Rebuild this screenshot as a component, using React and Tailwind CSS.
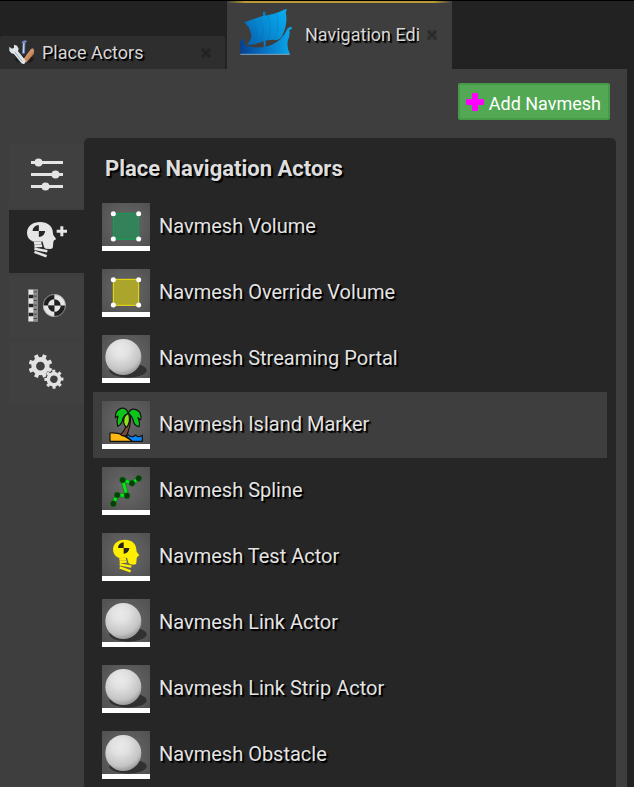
import { useId, useState } from "react";

const textShadow = "[text-shadow:1px_1px_0_#000,2px_2px_1px_#000]";

const ToolsIcon = () => (
  <svg viewBox="0 0 75 75" className="h-[25px] w-[25px] shrink-0" aria-hidden="true">
    <defs>
      <linearGradient id="handle" x1="0" y1="0" x2="1" y2="1">
        <stop offset="0" stopColor="#f3c39a" />
        <stop offset="1" stopColor="#a85d2c" />
      </linearGradient>
    </defs>
    <ellipse cx="46" cy="58" rx="28" ry="11" fill="#111" opacity="0.6" />
    <path d="M37 6 L46 1 L55 3 L49 9 L48 40 L39 42 L41 11 Z" fill="#6f88bd" />
    <path d="M43 10 L46 9 L45 38 L42 38 Z" fill="#cfdcf5" />
    <path d="M66 27 L72 25 L76 32 L74 42 L52 68 L41 60 Z" fill="url(#handle)" />
    <path d="M1 20 L9 26 L15 23 L15 14 L24 17 L29 26 L27 34 L48 59 Q52 67 45 72 Q39 73 34 66 L15 42 L7 40 L1 32 Z" fill="#dde6ea" />
    <path d="M18 36 L40 65" stroke="#9eacb5" strokeWidth="3" />
  </svg>
);

const ShipIcon = () => (
  <svg viewBox="0 0 156 138" className="h-[46px] w-[52px]" aria-hidden="true">
    <defs>
      <linearGradient id="sail" x1="0" y1="0.8" x2="1" y2="0.2">
        <stop offset="0" stopColor="#0564b4" />
        <stop offset="0.5" stopColor="#078bd2" />
        <stop offset="1" stopColor="#08aaf0" />
      </linearGradient>
      <linearGradient id="hull" x1="0" y1="0" x2="1" y2="0">
        <stop offset="0" stopColor="#053f90" />
        <stop offset="0.5" stopColor="#0875c4" />
        <stop offset="1" stopColor="#09a8ec" />
      </linearGradient>
    </defs>
    <path d="M69 8 L75 8 L77 18 L77 112 L71 114 Z" fill="#0a7cc4" />
    <path d="M13 40 L68 21 Q104 16 132 2 L141 0 L137 10 Q145 45 125 84 Q116 97 101 92 Q78 91 56 102 Q40 109 21 106 Q40 87 31 66 Q27 53 13 40 Z" fill="url(#sail)" />
    <g stroke="#056bb6" strokeWidth="2" fill="none" opacity="0.45">
      <path d="M38 32 Q58 65 43 103" />
      <path d="M60 25 Q78 62 63 97" />
      <path d="M82 19 Q100 55 84 93" />
      <path d="M108 13 Q122 50 105 91" />
    </g>
    <path d="M2 136 L0 103 Q2 91 10 91 Q16 93 12 98 Q10 110 27 112 Q60 121 94 108 Q126 94 139 65 Q142 55 155 53 L155 59 L148 64 Q151 78 143 96 Q140 116 150 136 Z" fill="url(#hull)" />
    <path d="M1 136 H149" stroke="#7fa6c4" strokeWidth="3" />
  </svg>
);

const CloseIcon = () => (
  <svg viewBox="0 0 10 10" className="h-[10px] w-[10px]" aria-hidden="true">
    <rect width="10" height="10" fill="#222" opacity="0.2" />
    <path d="M1 1 L9 9 M9 1 L1 9" stroke="#1b1b1b" strokeWidth="2" opacity="0.5" />
  </svg>
);

const HeadShape = ({ color, dark }) => (
  <>
    <path d="M35 0 C56 0 70 12 70 30 L71 36 L78 46 Q79 50 73 51 L71 56 L70 70 Q69 75 63 75 L51 74 Q46 73 45 65 L42 54 L18 55 C6 50 0 41 0 29 C1 10 16 0 35 0 Z" fill={color} />
    <path d="M32 25 V8 A17 17 0 0 0 15 25 Z M32 25 V42 A17 17 0 0 0 49 25 Z" fill={dark} />
    <path d="M19 59 L39 58 M20 67 L41 66 M20 74 L55 81 M20 83 L53 95" stroke={color} strokeWidth="7" />
  </>
);

const SlidersIcon = () => (
  <svg viewBox="0 0 34 34" className="h-[34px] w-[34px]" fill="#e4e4e4" aria-hidden="true">
    <rect x="1" y="4" width="32" height="3" />
    <rect x="1" y="16" width="32" height="3" />
    <rect x="1" y="28" width="32" height="3" />
    <circle cx="8.500" cy="5.500" r="4" />
    <circle cx="25.500" cy="17.500" r="4" />
    <circle cx="15.500" cy="29.500" r="4" />
  </svg>
);

const AddActorIcon = () => (
  <svg viewBox="0 0 120 108" className="h-[36px] w-[40px]" aria-hidden="true">
    <g transform="scale(1.11 1.08)">
      <HeadShape color="#e6e6e6" dark="#262626" />
    </g>
    <path d="M100 13 H109 V23 H120 V32 H109 V43 H100 V32 H89 V23 H100 Z" fill="#e6e6e6" />
  </svg>
);

const MeasureIcon = () => (
  <svg viewBox="0 0 114 98" className="h-[33px] w-[38px]" aria-hidden="true">
    <rect x="0" y="0" width="30" height="98" fill="#8b8b8b" />
    <rect x="2" y="2" width="14" height="94" fill="#e6e6e6" />
    <path d="M2 17 H16 V27 H2 Z M2 44 H16 V54 H2 Z M2 71 H16 V81 H2 Z" fill="#222" />
    <path d="M17 8 H27 M17 21 H27 M17 34 H27 M17 48 H27 M17 61 H27 M17 75 H27 M17 88 H27" stroke="#4a4a4a" strokeWidth="3" />
    <circle cx="79" cy="49" r="34" fill="#e6e6e6" />
    <path d="M79 49 V15 A34 34 0 0 0 45 49 Z M79 49 V83 A34 34 0 0 0 113 49 Z" fill="#202020" />
    <path d="M79 49 V30 A19 19 0 0 0 60 49 Z M79 49 V68 A19 19 0 0 0 98 49 Z" fill="#e6e6e6" />
    <path d="M79 49 V30 A19 19 0 0 1 98 49 Z M79 49 V68 A19 19 0 0 1 60 49 Z" fill="#202020" />
    <circle cx="79" cy="49" r="33" fill="none" stroke="#a8a8a8" strokeWidth="2" />
  </svg>
);

const Gear = ({ cx, cy, r, hole, tooth }) => (
  <g transform={`translate(${cx} ${cy})`}>
    {[22, 67, 112, 157, 202, 247, 292, 337].map((angle) => (
      <rect
        key={angle}
        x={-tooth / 2}
        y={-r - tooth * 0.7}
        width={tooth}
        height={tooth * 1.4}
        transform={`rotate(${angle})`}
        fill="#e2e2e2"
      />
    ))}
    <circle r={(r + hole) / 2} fill="none" stroke="#e2e2e2" strokeWidth={r - hole} />
  </g>
);

const GearsIcon = () => (
  <svg viewBox="0 0 104 104" className="h-[35px] w-[35px]" aria-hidden="true">
    <Gear cx={34} cy={36} r={27} hole={13} tooth={12} />
    <g transform="rotate(22 74 75)">
      <circle cx="74" cy="75" r="25" fill="#404040" />
      <Gear cx={74} cy={75} r={22} hole={11} tooth={9} />
    </g>
  </svg>
);

const VolumeArt = ({ fill, stroke }) => (
  <>
    <rect x="34" y="31" width="76" height="78" fill={fill} stroke={stroke} strokeWidth="3" />
    {[[34, 32], [110, 32], [34, 108], [110, 108]].map(([x, y]) => (
      <circle key={`${x}-${y}`} cx={x} cy={y} r="7.500" fill="#fff" />
    ))}
  </>
);

const SphereArt = () => {
  const id = useId();

  return (
    <>
      <defs>
        <radialGradient id={id} cx="0.42" cy="0.3" r="0.75">
          <stop offset="0" stopColor="#eaeaea" />
          <stop offset="0.3" stopColor="#e2e2e2" />
          <stop offset="0.75" stopColor="#c4c4c4" />
          <stop offset="1" stopColor="#8c8c8c" />
        </radialGradient>
      </defs>
      <ellipse cx="78" cy="106" rx="56" ry="22" fill="#2a2a2a" opacity="0.85" />
      <circle cx="64" cy="66" r="54" fill={`url(#${id})`} />
    </>
  );
};

const IslandArt = () => (
  <g stroke="#111" strokeWidth="3.500" strokeLinejoin="round">
    <path d="M24 96 Q46 94 62 102 L92 121 H24 Z" fill="#fdb813" />
    <path d="M72 105 L79 101 L84 106 L94 107 L101 102 L107 107 L115 106 L121 103 V121 H92 Z" fill="#0a84f5" />
    <path d="M79 40 L86 44 Q86 80 73 104 Q63 106 56 101 Q78 81 79 40 Z" fill="#7b4b3a" />
    <path d="M79 36 Q86 22 99 25 Q113 28 116 42 Q119 50 116 56 L108 50 Q115 65 111 77 Q96 75 93 56 Q90 45 80 37 Z" fill="#0cc41a" />
    <path d="M79 36 Q72 19 57 22 Q44 27 41 39 L40 50 L48 45 L45 60 L47 76 Q60 70 63 52 Q68 41 79 36 Z" fill="#0cc41a" />
    <path d="M80 37 Q63 45 65 64 Q66 74 74 79 Q84 65 82 49 Z" fill="#8be51a" />
  </g>
);

const SplineArt = () => (
  <>
    <polyline points="34,110 46,84 75,86 62,39 90,49 110,34" fill="none" stroke="#0b8b0f" strokeWidth="12" />
    <polyline points="34,110 46,84 75,86 62,39 90,49 110,34" fill="none" stroke="#06e81c" strokeWidth="8" />
    {[[34, 110], [46, 84], [75, 86], [62, 39], [90, 49], [110, 34]].map(([x, y]) => (
      <circle key={x} cx={x} cy={y} r="8.500" fill="#043f07" stroke="#075c0b" strokeWidth="2" />
    ))}
  </>
);

const TestActorArt = () => (
  <g transform="translate(33 20)">
    <HeadShape color="#ffee00" dark="#222" />
  </g>
);

const actors = [
  { name: "Navmesh Volume", art: <VolumeArt fill="#338259" stroke="#159d57" /> },
  { name: "Navmesh Override Volume", art: <VolumeArt fill="#aca52c" stroke="#efe40c" /> },
  { name: "Navmesh Streaming Portal", art: <SphereArt /> },
  { name: "Navmesh Island Marker", art: <IslandArt /> },
  { name: "Navmesh Spline", art: <SplineArt /> },
  { name: "Navmesh Test Actor", art: <TestActorArt /> },
  { name: "Navmesh Link Actor", art: <SphereArt /> },
  { name: "Navmesh Link Strip Actor", art: <SphereArt /> },
  { name: "Navmesh Obstacle", art: <SphereArt /> },
];

const modes = [
  { name: "Settings", icon: <SlidersIcon /> },
  { name: "Place actors", icon: <AddActorIcon /> },
  { name: "Measure", icon: <MeasureIcon /> },
  { name: "Options", icon: <GearsIcon /> },
];

const Thumbnail = ({ children }) => (
  <svg
    viewBox="0 0 144 129"
    className="h-12 w-12 shrink-0 border-b-[5px] border-white bg-[radial-gradient(circle,#6a6a6a,#505050)]"
    aria-hidden="true"
  >
    {children}
  </svg>
);

const App = () => {
  const [mode, setMode] = useState("Place actors");
  const [selected, setSelected] = useState("Navmesh Island Marker");

  return (
    <div className="flex h-screen flex-col overflow-hidden border-t border-black bg-[#222222] font-[Roboto,sans-serif] text-[#e4e4e4]">
      {/* Tabs */}
      <div className="flex h-17 shrink-0 items-end gap-0.5">
        <div className="flex h-[33px] w-[225px] items-center rounded-t-[3px] bg-[#2e2e2e] pr-3.5 pl-[9px]">
          <button className="flex flex-1 items-center gap-2">
            <ToolsIcon />
            <span className={`text-lg text-[#d8d8d8] ${textShadow}`}>Place Actors</span>
          </button>
          <button aria-label="Close Place Actors">
            <CloseIcon />
          </button>
        </div>
        <div className="flex h-full w-[225px] flex-col bg-[#3e3e3e]">
          <div className="h-0.5 shrink-0 bg-[linear-gradient(90deg,#3e3e3e,#b89a35_8%,#b89a35_92%,#3e3e3e)]" />
          <div className="flex flex-1 items-center pr-[15px] pb-0.5 pl-[13px]">
            <button className="flex min-w-0 flex-1 items-center gap-[13px]">
              <span className="shrink-0 pb-1.5">
                <ShipIcon />
              </span>
              <span className={`overflow-hidden text-lg whitespace-nowrap text-[#d8d8d8] ${textShadow}`}>
                Navigation Editor
              </span>
            </button>
            <button className="ml-2" aria-label="Close Navigation Editor">
              <CloseIcon />
            </button>
          </div>
        </div>
      </div>

      {/* Editor body */}
      <main className="mr-[7px] flex min-h-0 flex-1 flex-col bg-[#3e3e3e]">
        <div className="flex shrink-0 justify-end pt-3.5 pr-[17px] pb-[18px]">
          <button className="flex h-[37px] items-center gap-[5px] rounded-xs border-2 border-[#469a48] bg-[#52a853] pr-[7px] pl-1.5 text-lg text-white">
            <svg viewBox="0 0 18 18" className="h-[18px] w-[18px]" fill="#ff00ff" aria-hidden="true">
              <path d="M7 0 H11 Q12 0 12 1 V6 H17 Q18 6 18 7 V11 Q18 12 17 12 H12 V17 Q12 18 11 18 H7 Q6 18 6 17 V12 H1 Q0 12 0 11 V7 Q0 6 1 6 H6 V1 Q6 0 7 0 Z" />
            </svg>
            <span className="pt-1">Add Navmesh</span>
          </button>
        </div>

        <div className="flex min-h-0 flex-1 pr-[11px] pl-[9px]">
          <nav className="flex w-[75px] shrink-0 flex-col gap-[3px] pt-1.5">
            {modes.map((item) => (
              <button
                key={item.name}
                aria-label={item.name}
                onClick={() => setMode(item.name)}
                className={`flex h-[63px] items-center justify-center pb-1 ${
                  mode === item.name ? "bg-[#262626]" : "bg-[#404040]"
                }`}
              >
                {item.icon}
              </button>
            ))}
          </nav>

          <section className="flex-1 overflow-hidden rounded-t-[5px] bg-[#262626] px-[9px]">
            <h1 className={`flex h-14 items-center px-3 pt-1 text-[22px] font-bold text-[#dedede] ${textShadow}`}>
              Place Navigation Actors
            </h1>
            <ul>
              {actors.map((actor) => (
                <li key={actor.name}>
                  <button
                    onClick={() => setSelected(actor.name)}
                    className={`flex h-[66px] w-full items-center gap-[9px] px-[9px] text-left text-xl ${
                      selected === actor.name ? "bg-[#3e3e3e]" : ""
                    }`}
                  >
                    <Thumbnail>{actor.art}</Thumbnail>
                    <span className={`pb-0.5 ${textShadow}`}>{actor.name}</span>
                  </button>
                </li>
              ))}
            </ul>
          </section>
        </div>
      </main>
    </div>
  );
};

export default App;
